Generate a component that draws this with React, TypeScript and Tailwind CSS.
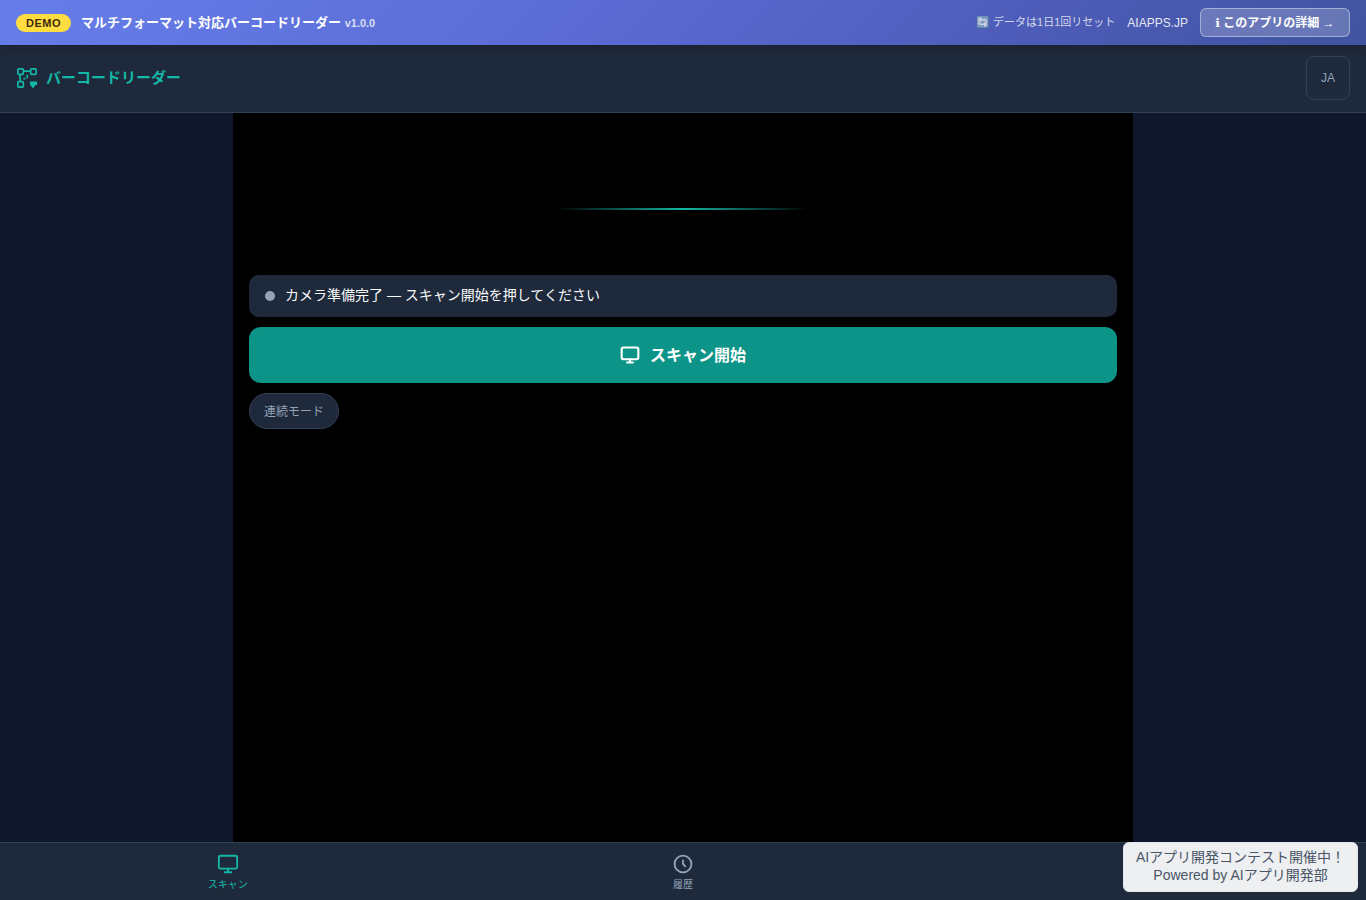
import { useState } from "react";

type Tab = "scan" | "history" | "settings";

type IconProps = {
  className?: string;
  strokeWidth?: number;
};

function LogoIcon({ className }: IconProps) {
  return (
    <svg viewBox="0 0 24 24" fill="none" stroke="currentColor" strokeWidth="1.8" className={className}>
      <rect x="2" y="2" width="6" height="6" rx="1" />
      <rect x="16" y="2" width="6" height="6" rx="1" />
      <rect x="2" y="16" width="6" height="6" rx="1" />
      <path d="M8 4.5h8M4.5 8v8" />
      <path d="M8 12.6h2.4M12.3 8.4v4" />
      <path d="M15.2 15.8h7.8v3.8h-1.8L19 22.8h-.8l-3-3.6z" fill="currentColor" stroke="none" />
    </svg>
  );
}

function MonitorIcon({ className, strokeWidth = 2 }: IconProps) {
  return (
    <svg
      viewBox="0 0 24 24"
      fill="none"
      stroke="currentColor"
      strokeWidth={strokeWidth}
      strokeLinecap="round"
      strokeLinejoin="round"
      className={className}
    >
      <rect x="2" y="3" width="20" height="14" rx="2" />
      <path d="M8.5 21h7M12 17v4" />
    </svg>
  );
}

function ClockIcon({ className }: IconProps) {
  return (
    <svg
      viewBox="0 0 24 24"
      fill="none"
      stroke="currentColor"
      strokeWidth="2"
      strokeLinecap="round"
      strokeLinejoin="round"
      className={className}
    >
      <circle cx="12" cy="12" r="9.2" />
      <path d="M12 8v4l2.5 2.5" />
    </svg>
  );
}

function DemoBar() {
  return (
    <div className="relative z-10 flex h-[45px] shrink-0 items-center justify-between bg-[linear-gradient(135deg,#667eea_0%,#5a6ad2_45%,#4f5dbb_72%,#4054a0_100%)] px-4 text-white shadow-[0_2px_10px_rgba(0,0,0,0.2)]">
      <div className="flex items-center gap-2.5">
        <span className="flex h-[18px] items-center rounded-full bg-[#ffdd40] px-2.5 pt-px text-[11px] font-bold tracking-[0.5px] text-[#3b2a0a]">
          DEMO
        </span>
        <span className="text-[13px] font-bold">
          マルチフォーマット対応バーコードリーダー{" "}
          <span className="text-[11px] opacity-75">v1.0.0</span>
        </span>
      </div>
      <div className="flex items-center gap-3">
        <span className="text-[11px] opacity-75">🔄 データは1日1回リセット</span>
        <a href="#" className="text-xs opacity-85">AIAPPS.JP</a>
        <a
          href="#"
          className="flex h-[29px] w-[150px] items-center justify-center rounded-md border border-white/40 bg-white/20 pt-px text-xs font-bold whitespace-pre"
        >
          <span className="font-['DejaVu_Sans',sans-serif]">ℹ</span> このアプリの詳細 →
        </a>
      </div>
    </div>
  );
}

export default function App() {
  const [tab, setTab] = useState<Tab>("scan");

  const tabColor = (name: Tab) => (tab === name ? "text-[#14b8a6]" : "text-[#94a3b8]");

  return (
    <div className="flex h-screen flex-col overflow-hidden bg-[#0f172a] font-['Liberation_Sans','Noto_Sans_CJK_JP',sans-serif]">
      <DemoBar />

      <header className="flex h-[68px] shrink-0 items-center justify-between border-b border-[#334155] bg-[#1e293b] px-4 pb-px">
        <div className="flex items-center gap-2 text-[#14b8a6]">
          <LogoIcon className="size-[22px]" />
          <h1 className="pt-px text-[15px] font-bold">バーコードリーダー</h1>
        </div>
        <button className="size-11 rounded-lg border border-[#334155] text-xs text-[#94a3b8]">JA</button>
      </header>

      <main className="mx-auto flex w-[900px] flex-1 flex-col bg-black">
        <div className="flex h-[152px] shrink-0 justify-center pt-[95px]">
          <div className="h-0.5 w-[252px] bg-[linear-gradient(90deg,transparent,#14b8a6,transparent)]" />
        </div>
        <div className="flex flex-col items-start gap-2.5 px-4 pt-2.5">
          <div className="flex h-[42px] w-full items-center gap-2.5 rounded-[10px] bg-[#1e293b] px-4 text-sm text-[#f8fafc]">
            <span className="size-2.5 rounded-full bg-[#94a3b8]" />
            <span className="pb-0.5">カメラ準備完了 — スキャン開始を押してください</span>
          </div>
          <button className="flex h-14 w-full items-center justify-center gap-2.5 rounded-xl bg-[#0d9488] text-base font-bold text-white">
            <MonitorIcon className="size-5" strokeWidth={2.5} />
            <span className="pt-0.5">スキャン開始</span>
          </button>
          <button className="h-9 rounded-full border border-[#334155] bg-[#1e293b] px-3.5 pt-0.5 text-xs text-[#94a3b8]">
            連続モード
          </button>
        </div>
      </main>

      <nav className="grid h-[58px] shrink-0 grid-cols-3 border-t border-[#334155] bg-[#1e293b] text-[10px]">
        <button
          onClick={() => setTab("scan")}
          className={`flex flex-col items-center gap-0.5 pt-2.5 ${tabColor("scan")}`}
        >
          <MonitorIcon className="size-[22px]" />
          スキャン
        </button>
        <button
          onClick={() => setTab("history")}
          className={`flex flex-col items-center gap-0.5 pt-2.5 ${tabColor("history")}`}
        >
          <ClockIcon className="size-[22px]" />
          履歴
        </button>
        <button onClick={() => setTab("settings")} />
      </nav>

      <div className="fixed right-2 bottom-2 flex h-[50px] w-[235px] flex-col items-center justify-center rounded-md border border-[#e2e8f0] bg-[#edeff0] pb-0.5 text-sm leading-[18px] text-[#4a5568]">
        <span>AIアプリ開発コンテスト開催中！</span>
        <span>Powered by AIアプリ開発部</span>
      </div>
    </div>
  );
}
